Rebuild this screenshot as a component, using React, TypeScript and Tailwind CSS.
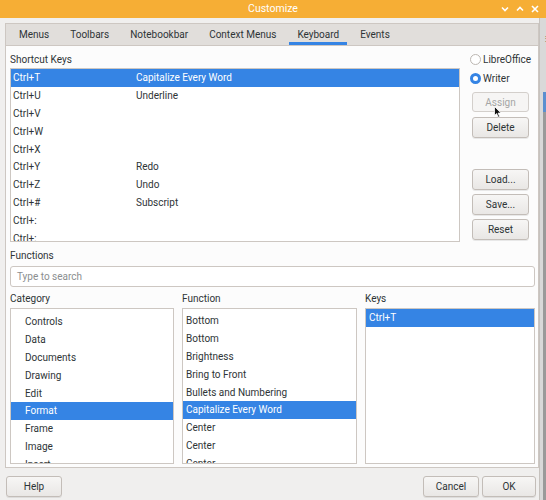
import React from 'react';

const shortcuts: [string, string][] = [
  ['Ctrl+T', 'Capitalize Every Word'],
  ['Ctrl+U', 'Underline'],
  ['Ctrl+V', ''],
  ['Ctrl+W', ''],
  ['Ctrl+X', ''],
  ['Ctrl+Y', 'Redo'],
  ['Ctrl+Z', 'Undo'],
  ['Ctrl+#', 'Subscript'],
  ['Ctrl+:', ''],
  ['Ctrl+;', ''],
];

const categories = ['Controls', 'Data', 'Documents', 'Drawing', 'Edit', 'Format', 'Frame', 'Image', 'Insert'];

const functions = [
  'Bottom',
  'Bottom',
  'Brightness',
  'Bring to Front',
  'Bullets and Numbering',
  'Capitalize Every Word',
  'Center',
  'Center',
  'Center',
];

const tabs = ['Menus', 'Toolbars', 'Notebookbar', 'Context Menus', 'Keyboard', 'Events'];

function Button({ label, disabled, className = '' }: { label: string; disabled?: boolean; className?: string }) {
  return (
    <div
      className={`flex items-center justify-center rounded-[3px] border ${
        disabled
          ? 'border-[#d3cfcb] bg-[#f6f5f4] text-[#a4a5a4]'
          : 'border-[#c3bdb8] bg-gradient-to-b from-[#f7f6f5] to-[#e9e7e5] text-[#2e3436] shadow-[0_1px_0_rgba(0,0,0,0.08)]'
      } ${className}`}
    >
      {label}
    </div>
  );
}

function Radio({ label, checked }: { label: string; checked?: boolean }) {
  return (
    <div className="flex items-center gap-[2px]">
      <span
        className={`h-[11px] w-[11px] rounded-full bg-white ${
          checked ? 'border-[3px] border-[#3584e4]' : 'border border-[#bcb7b2]'
        }`}
      />
      <span>{label}</span>
    </div>
  );
}

function Chevron({ up }: { up?: boolean }) {
  return (
    <svg width="8" height="6" viewBox="0 0 8 6">
      <path d={up ? 'M1 4.5 L4 1.5 L7 4.5' : 'M1 1.5 L4 4.5 L7 1.5'} stroke="white" strokeWidth="1.6" fill="none" />
    </svg>
  );
}

export default function App() {
  return (
    <div className="flex h-[500px] w-[546px] flex-col overflow-hidden font-['Roboto',sans-serif] text-[10px] text-[#2e3436]">
      {/* Title bar */}
      <div className="relative flex h-[18px] items-center justify-center bg-[#f6ae35] text-[10.5px] text-white">
        <span>Customize</span>
        <div className="absolute right-[7px] top-0 flex h-full items-center gap-[7px]">
          <Chevron />
          <Chevron up />
          <svg width="8" height="8" viewBox="0 0 8 8">
            <path d="M1 1 L7 7 M7 1 L1 7" stroke="white" strokeWidth="1.6" />
          </svg>
        </div>
      </div>

      <div className="flex flex-1">
        <div className="flex w-[540px] flex-col border-r border-[#c6c2be] bg-[#f0efee] pl-[5px] pt-[5px]">
          {/* Notebook */}
          <div className="flex h-[445px] w-[534px] flex-col border border-[#cdc7c2]">
            <div className="flex h-[22px] border-b border-[#cdc7c2] bg-[#e1dedb] pl-[5px]">
              {tabs.map((t) => (
                <div
                  key={t}
                  className={`mr-[5px] flex h-full items-center px-[8px] ${
                    t === 'Keyboard' ? 'border-b-[3px] border-[#3584e4] pt-[3px]' : ''
                  }`}
                >
                  {t}
                </div>
              ))}
            </div>

            <div className="flex flex-1 flex-col bg-[#fcfcfc] pl-[4px] pt-[4px]">
              {/* Shortcut keys */}
              <div className="flex h-[192px]">
                <div className="flex w-[450px] flex-col">
                  <div className="flex h-[18px] items-center">Shortcut Keys</div>
                  <div className="h-[174px] overflow-hidden border border-[#cdc7c2] bg-white">
                    {shortcuts.map(([k, f], i) => (
                      <div
                        key={k}
                        className={`flex h-[17.8px] items-center pl-[2px] ${i === 0 ? 'bg-[#3584e4] text-white' : ''}`}
                      >
                        <span className="w-[123px]">{k}</span>
                        <span>{f}</span>
                      </div>
                    ))}
                  </div>
                </div>

                <div className="relative ml-[10px] flex w-[62px] flex-col">
                  <div className="flex h-[18px] items-center">
                    <Radio label="LibreOffice" />
                  </div>
                  <div className="flex h-[21px] items-center">
                    <Radio label="Writer" checked />
                  </div>
                  <Button label="Assign" disabled className="ml-[2px] mt-[3px] h-[20px] w-[57px]" />
                  <Button label="Delete" className="ml-[2px] mt-[5px] h-[21px] w-[57px]" />
                  <Button label="Load..." className="ml-[2px] mt-[31px] h-[21px] w-[57px]" />
                  <Button label="Save..." className="ml-[2px] mt-[4px] h-[21px] w-[57px]" />
                  <Button label="Reset" className="ml-[2px] mt-[4px] h-[21px] w-[57px]" />
                  {/* mouse pointer */}
                  <svg className="absolute left-[24px] top-[56px]" width="8" height="12" viewBox="0 0 8 12">
                    <path d="M0.5 0.5 L0.5 9.5 L2.6 7.6 L4.2 11.2 L5.6 10.6 L4.1 7.1 L7 7.1 Z" fill="#111" stroke="white" strokeWidth="0.8" />
                  </svg>
                </div>
              </div>

              {/* Functions */}
              <div className="mt-[4px] flex h-[18px] items-center">Functions</div>
              <div className="mt-[2px] flex h-[21px] w-[525px] items-center rounded-[3px] border border-[#cdc7c2] bg-white pl-[6px] text-[#8b8e8f]">
                Type to search
              </div>

              <div className="mt-[2px] grid w-[525px] grid-cols-[164px_175px_170px] gap-x-[8px]">
                <div className="flex h-[19px] items-center">Category</div>
                <div className="flex h-[19px] items-center">Function</div>
                <div className="flex h-[19px] items-center">Keys</div>

                <div className="h-[156px] overflow-hidden border border-[#cdc7c2] bg-white pt-[4px]">
                  {categories.map((c) => (
                    <div
                      key={c}
                      className={`flex h-[17.8px] items-center pl-[14px] ${c === 'Format' ? 'bg-[#3584e4] text-white' : ''}`}
                    >
                      {c}
                    </div>
                  ))}
                </div>

                <div className="h-[156px] overflow-hidden border border-[#cdc7c2] bg-white pt-[3px]">
                  {functions.map((f, i) => (
                    <div
                      key={i}
                      className={`flex h-[17.8px] items-center whitespace-nowrap pl-[3px] ${
                        i === 5 ? 'bg-[#3584e4] text-white' : ''
                      }`}
                    >
                      {f}
                    </div>
                  ))}
                </div>

                <div className="h-[156px] overflow-hidden border border-[#cdc7c2] bg-white">
                  <div className="flex h-[17.8px] items-center bg-[#3584e4] pl-[3px] text-white">Ctrl+T</div>
                </div>
              </div>
            </div>
          </div>

          {/* Bottom buttons */}
          <div className="flex flex-1 items-start pt-[8px]">
            <Button label="Help" className="ml-[1px] h-[21px] w-[56px]" />
            <div className="ml-auto mr-[3px] flex gap-[3px]">
              <Button label="Cancel" className="h-[21px] w-[56px]" />
              <Button label="OK" className="h-[21px] w-[54px]" />
            </div>
          </div>
        </div>

        {/* desktop edge behind the window */}
        <div className="flex w-[6px] flex-col bg-[#d9d9d9]">
          <div className="mt-[18px] ml-[2px] text-[8px] leading-[6px] text-[#555]">⋮</div>
          <div className="ml-[3px] mt-[50px] h-[20px] w-[3px] bg-[#5b8fd0]" />
          <div className="ml-[3px] flex-1 w-[3px] bg-[#9a9a9a]" />
        </div>
      </div>
    </div>
  );
}
